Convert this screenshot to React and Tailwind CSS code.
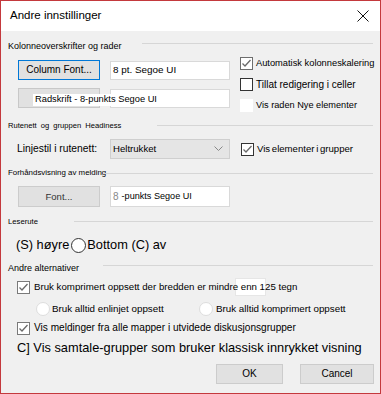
import React from "react";

function Check({ checked, border = "border-[#333333]", bare = false }) {
  return (
    <div
      className={`w-[13px] h-[13px] shrink-0 bg-white flex items-center justify-center ${bare ? "" : "border " + border}`}
    >
      {checked && (
        <svg width="11" height="11" viewBox="0 0 11 11">
          <polyline points="1.5,5.5 4,8 9.5,2" fill="none" stroke="#6a6a6a" strokeWidth="1.3" />
        </svg>
      )}
    </div>
  );
}

function Radio({ border = "border-[#9a9a9a]", size = "w-[14px] h-[14px]" }) {
  return <div className={`${size} shrink-0 rounded-full bg-white border ${border}`} />;
}

function Header({ text, textW, lineMt, textCls, mt }) {
  return (
    <div className={`flex h-[14px] ${mt}`}>
      <div className={`${textW} shrink-0 pl-[7px] flex items-center`}>
        <span className={`whitespace-nowrap leading-none text-black ${textCls}`}>{text}</span>
      </div>
      <div className={`flex-1 h-px bg-[#d6d6d6] mr-[7px] ${lineMt}`} />
    </div>
  );
}

export default function App() {
  return (
    <div className="w-[381px] h-[394px] border border-[#c4393d] bg-[#f0f0f0] font-['Liberation_Sans',Arial,sans-serif] text-black overflow-hidden flex flex-col whitespace-nowrap">
      {/* Title bar */}
      <div className="h-[30px] bg-white flex items-center justify-between pl-[9px] pr-[11px] shrink-0">
        <span className="text-[11.5px] leading-none">Andre innstillinger</span>
        <svg width="12" height="12" viewBox="0 0 12 12">
          <path d="M0.5 0.5 L11.5 11.5 M11.5 0.5 L0.5 11.5" stroke="#111" strokeWidth="1" />
        </svg>
      </div>

      {/* Body */}
      <div className="flex flex-col">
        <Header
          text="Kolonneoverskrifter og rader"
          textW="w-[141px]"
          lineMt="mt-[4px]"
          textCls="text-[9px]"
          mt="mt-[8px]"
        />

        <div className="flex h-[63px]">
          <div className="w-[239px] shrink-0 pl-[17px] pt-[7px] flex flex-col gap-[8px]">
            <div className="flex items-center gap-[10px] h-[20px]">
              <div className="w-[82px] h-[20px] bg-[#e1e1e1] border border-[#0078d7] flex items-center justify-center text-[10px] leading-none">
                Column Font...
              </div>
              <div className="w-[120px] h-[19px] bg-white border border-[#d9d9d9] flex items-center pl-[2px] text-[9.9px] leading-none">
                8 pt. Segoe UI
              </div>
            </div>
            <div className="flex items-center gap-[10px] h-[20px] relative">
              <div className="w-[82px] h-[20px] bg-[#e1e1e1] border border-[#c8c8c8]" />
              <div className="w-[120px] h-[19px] bg-white border border-[#d9d9d9]" />
              <div className="absolute left-[15px] top-[6px] h-[12px] w-[127px] bg-white flex items-center px-[2px] text-[9.3px] leading-none">
                Radskrift - 8-punkts Segoe UI
              </div>
            </div>
          </div>
          <div className="flex flex-col leading-none">
            <div className="h-[21px] flex items-center gap-[3px]">
              <Check checked border="border-[#6e6e6e]" />
              <span className="text-[9.3px]">Automatisk kolonneskalering</span>
            </div>
            <div className="h-[21px] flex items-center gap-[3px]">
              <Check />
              <span className="text-[10px]">Tillat redigering i celler</span>
            </div>
            <div className="h-[21px] flex items-center gap-[3px]">
              <Check bare />
              <span className="text-[9.2px]">Vis raden Nye elementer</span>
            </div>
          </div>
        </div>

        <Header
          text="Rutenett og gruppen Headiness"
          textW="w-[156px]"
          lineMt="mt-[6px]"
          textCls="text-[7.6px] [word-spacing:2px]"
          mt="mt-[3px]"
        />

        <div className="flex items-center h-[20px] mt-[6px] leading-none">
          <div className="w-[109px] shrink-0 pl-[16px] text-[10.3px]">Linjestil i rutenett:</div>
          <div className="w-[120px] h-[20px] bg-[#e5e5e5] border border-[#cfcfcf] flex items-center justify-between pl-[2px] pr-[6px] text-[9.6px]">
            <span>Heltrukket</span>
            <svg width="9" height="6" viewBox="0 0 9 6">
              <polyline points="0.5,0.5 4.5,4.5 8.5,0.5" fill="none" stroke="#888" strokeWidth="1" />
            </svg>
          </div>
          <div className="flex items-center gap-[3px] ml-[11px] text-[9.6px]">
            <Check checked border="border-[#333333]" />
            <span className="[word-spacing:-1px]">Vis elementer i grupper</span>
          </div>
        </div>

        <Header
          text="Forhåndsvisning av melding"
          textW="w-[102px]"
          lineMt="mt-[7px]"
          textCls="text-[7.9px]"
          mt="mt-[7px]"
        />

        <div className="flex items-center gap-[10px] h-[21px] mt-[6px] pl-[17px] leading-none">
          <div className="w-[82px] h-[21px] bg-[#e1e1e1] border border-[#cccccc] flex items-center justify-center text-[9.5px] text-[#333]">
            Font...
          </div>
          <div className="w-[120px] h-[21px] bg-white border border-[#d9d9d9] flex items-center pl-[2px] gap-[3px]">
            <span className="text-[#888] text-[10px]">8</span>
            <span className="text-[9.1px]">-punkts Segoe UI</span>
          </div>
        </div>

        <Header
          text="Leserute"
          textW="w-[73px]"
          lineMt="mt-[6px]"
          textCls="text-[7.7px]"
          mt="mt-[8px]"
        />

        <div className="flex items-center h-[20px] mt-[6px] pl-[15px] text-[12.8px] leading-none">
          <span>(S) høyre</span>
          <Radio border="border-[#333333]" size="w-[15px] h-[15px] ml-[2px] mr-[1px]" />
          <span>Bottom (C) av</span>
        </div>

        <Header
          text="Andre alternativer"
          textW="w-[102px]"
          lineMt="mt-[4px]"
          textCls="text-[9px]"
          mt="mt-[6px]"
        />

        <div className="relative flex items-center h-[20px] mt-[2px] pl-[16px] gap-[4px] text-[9.7px] leading-none">
          <div className="absolute left-[234px] top-[1px] w-[31px] h-[18px] bg-white border border-[#e6e6e6]" />
          <Check checked border="border-[#7a7a7a]" />
          <span className="relative">Bruk komprimert oppsett der bredden er mindre enn 125 tegn</span>
        </div>

        <div className="flex items-center h-[20px] mt-[2px] pl-[35px] text-[9.8px] leading-none">
          <Radio border="border-[#dddddd]" />
          <span className="ml-[2px] w-[147px]">Bruk alltid enlinjet oppsett</span>
          <Radio border="border-[#dddddd]" />
          <span className="ml-[3px]">Bruk alltid komprimert oppsett</span>
        </div>

        <div className="flex items-center h-[19px] pl-[16px] gap-[4px] text-[10.1px] leading-none">
          <Check checked border="border-[#7a7a7a]" />
          <span>Vis meldinger fra alle mapper i utvidede diskusjonsgrupper</span>
        </div>

        <div className="flex items-center h-[20px] pl-[16px] text-[12.8px] leading-none">
          C] Vis samtale-grupper som bruker klassisk innrykket visning
        </div>

        <div className="flex justify-end gap-[17px] mt-[6px] pr-[6px] leading-none">
          <div className="w-[67px] h-[20px] bg-[#e1e1e1] border border-[#cccccc] flex items-center justify-center text-[10px]">
            OK
          </div>
          <div className="w-[74px] h-[20px] bg-[#e1e1e1] border border-[#cccccc] flex items-center justify-center text-[10px]">
            Cancel
          </div>
        </div>
      </div>
    </div>
  );
}
